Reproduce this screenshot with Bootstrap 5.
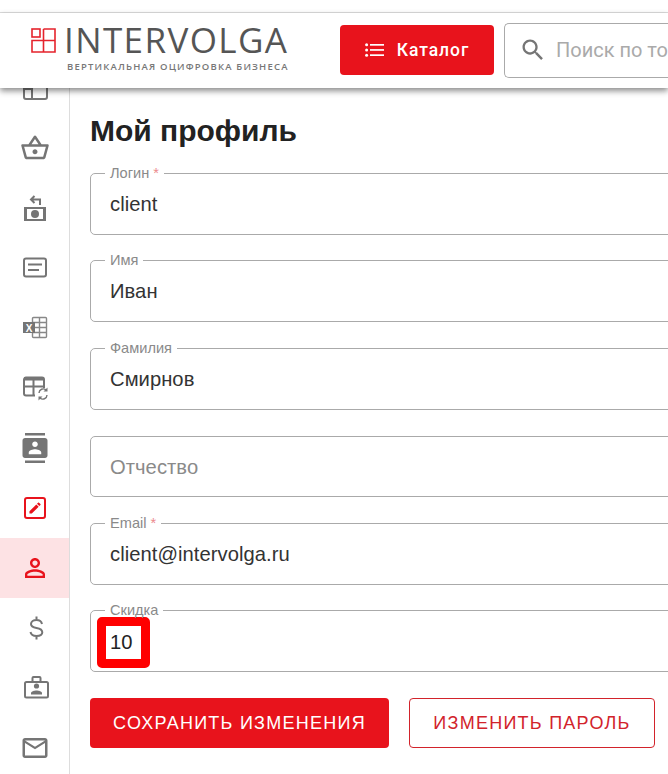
<!DOCTYPE html>
<html lang="ru">
<head>
<meta charset="utf-8">
<title>Мой профиль</title>
<link href="https://cdn.jsdelivr.net/npm/bootstrap@5.3.0/dist/css/bootstrap.min.css" rel="stylesheet">
<style>
html,body{height:774px;overflow:hidden;background:#fff;}
body{font-family:"Liberation Sans",Arial,sans-serif;color:#222;}
.top-strip{height:13px;border-bottom:1px solid #ddd;background:#fff;}
.site-head{height:75px;background:#fff;box-shadow:0 3px 6px rgba(0,0,0,.45);position:relative;z-index:5;width:668px;overflow:visible;}
.logo-box{width:340px;padding-left:31px;flex:none;height:75px;}
.logo-row{gap:8px;height:30px;margin-top:12px;}
.logo-name{font-family:"Open Sans",sans-serif;font-weight:400;font-size:35px;line-height:30px;color:#555;letter-spacing:1.4px;}
.logo-sub{font-family:"Open Sans",sans-serif;font-weight:600;font-size:9.5px;line-height:12px;color:#777;letter-spacing:1.18px;margin:6px 0 0 36px;white-space:nowrap;}
.cat-btn{width:154px;height:50px;background:#e8131c;border:0;border-radius:4px;color:#fff;font-family:Roboto,sans-serif;font-weight:500;font-size:17.5px;letter-spacing:.95px;gap:13px;flex:none;margin-top:-1px;}
.cat-btn:hover{background:#e8131c;color:#fff;}
.search-box{margin-left:10px;width:164px;height:55px;border:1px solid #aaa;border-right:0;border-radius:5px 0 0 5px;padding-left:14px;gap:9px;flex:none;margin-top:-1px;overflow:hidden;}
.search-ph{font-family:Roboto,sans-serif;font-size:20px;color:#aaa;white-space:nowrap;}
.page-body{height:686px;}
.side-rail{width:70px;flex:none;border-right:1px solid #ddd;margin-top:-30px;}
.rail-item{height:60px;flex:none;}
.rail-item svg{width:30px;height:30px;display:block;}
.rail-on{background:#fde2e4;}
.gr{fill:#757575;}
.gs{fill:none;stroke:#757575;stroke-width:2;}
.rd{fill:#e8131c;}
.rs{fill:none;stroke:#e8131c;stroke-width:2;}
.main-pane{padding:25px 0 0 20px;width:598px;overflow:hidden;}
.page-title{font-family:"Liberation Sans",Arial,sans-serif;font-size:30px;font-weight:700;line-height:36px;margin:0 0 17.5px;color:#222;}
.out-field{width:700px;height:68px;border:1px solid #aaa;border-radius:5px;padding:0 19px;margin:0 0 19.5px;display:block;}
.out-field legend{float:none;width:auto;font-size:14.6px;line-height:13px;padding:0 5px;margin:0 0 0 -5px;color:#8a8a8a;}
.out-field .req{color:#ec8a8e;}
.out-val{font-size:20.2px;letter-spacing:.05px;line-height:34px;color:#333;margin-top:7px;}
.out-field.no-leg{height:61.5px;margin-top:26px;padding-top:13px;}
.no-leg .out-val{color:#8a8a8a;margin-top:0;}
.hi-val{margin-left:-13px;width:53px;height:51px;border:9px solid #f00;border-radius:5px;background:#fff;line-height:33px;padding-left:4px;font-size:20.2px;color:#222;}
.act-row{gap:20px;margin-top:26px;}
.save-btn,.pass-btn{font-family:"Liberation Sans",Arial,sans-serif;font-size:18px;letter-spacing:1.25px;height:50px;border-radius:4px;padding:0;white-space:nowrap;}
.save-btn{width:299px;background:#e8131c;border:0;color:#fff;}
.pass-btn{width:246px;background:#fff;border:1px solid #d2232b;color:#d2232b;}
.save-btn:hover{background:#e8131c;color:#fff;}
.pass-btn:hover{background:#fff;color:#d2232b;}
</style>
</head>
<body>
<div class="top-strip"></div>
<header class="site-head d-flex align-items-center">
  <div class="logo-box">
    <div class="logo-row d-flex align-items-center">
      <svg width="25" height="25" viewBox="0 0 25 25" fill="none" stroke="#e5232c" stroke-width="1.6"><rect x="1" y="1" width="8" height="8"/><path d="M12.5 1H24V24H1V12.5H24M12.5 1V24"/></svg>
      <span class="logo-name">INTERVOLGA</span>
    </div>
    <div class="logo-sub">ВЕРТИКАЛЬНАЯ ОЦИФРОВКА БИЗНЕСА</div>
  </div>
  <button class="btn cat-btn d-flex align-items-center justify-content-center" type="button">
    <svg width="19" height="14" viewBox="0 0 19 14" fill="#fff"><circle cx="1.6" cy="1.8" r="1.5"/><circle cx="1.6" cy="7" r="1.5"/><circle cx="1.6" cy="12.2" r="1.5"/><rect x="5" y="1" width="14" height="1.7"/><rect x="5" y="6.1" width="14" height="1.7"/><rect x="5" y="11.3" width="14" height="1.7"/></svg>
    <span>Каталог</span>
  </button>
  <div class="search-box d-flex align-items-center">
    <svg width="28" height="28" viewBox="0 0 24 24" class="gr"><path d="M15.5 14h-.79l-.28-.27C15.41 12.59 16 11.11 16 9.5 16 5.91 13.09 3 9.5 3S3 5.91 3 9.5 5.91 16 9.5 16c1.61 0 3.09-.59 4.23-1.57l.27.28v.79l5 4.99L20.49 19l-4.99-5zm-6 0C7.01 14 5 11.99 5 9.5S7.01 5 9.5 5 14 7.01 14 9.5 11.99 14 9.5 14z"/></svg>
    <span class="search-ph">Поиск по то</span>
  </div>
</header>
<div class="page-body d-flex">
  <nav class="side-rail d-flex flex-column">
    <div class="rail-item d-flex align-items-center justify-content-center"><svg viewBox="0 0 30 30"><rect class="gs" x="4" y="5" width="23" height="21" rx="2"/><path class="gs" d="M12 5V26M4 16H12"/></svg></div>
    <div class="rail-item d-flex align-items-center justify-content-center"><svg viewBox="0 0 24 24" class="gr"><path d="M22 9h-4.79l-4.38-6.56c-.19-.28-.51-.42-.83-.42s-.64.14-.83.43L6.79 9H2c-.55 0-1 .45-1 1 0 .09.01.18.04.27l2.54 9.27c.23.84 1 1.46 1.92 1.46h13c.92 0 1.69-.62 1.93-1.46l2.54-9.27L23 10c0-.55-.45-1-1-1zM12 4.8L14.8 9H9.2L12 4.8zM18.5 19l-12.99.01L3.31 11H20.7l-2.2 8zM12 13c-1.1 0-2 .9-2 2s.9 2 2 2 2-.9 2-2-.9-2-2-2z"/></svg></div>
    <div class="rail-item d-flex align-items-center justify-content-center"><svg viewBox="0 0 30 30"><path class="gs" d="M20 12V6.500H11M14.500 3L11 6.500L14.500 10"/><rect class="gr" x="4" y="14" width="22" height="14"/><rect x="7" y="16" width="16" height="10" fill="#fff"/><circle class="gr" cx="15" cy="21" r="4"/></svg></div>
    <div class="rail-item d-flex align-items-center justify-content-center"><svg viewBox="0 0 30 30"><rect class="gs" x="4" y="5.500" width="22" height="18" rx="2"/><path class="gs" d="M8 11.500H22M8 17H19"/></svg></div>
    <div class="rail-item d-flex align-items-center justify-content-center"><svg viewBox="0 0 30 30"><rect x="12.500" y="4.500" width="14" height="20" rx="1" fill="none" stroke="#888" stroke-width="1.400"/><path d="M12.500 9.500H26.500M12.500 14.500H26.500M12.500 19.500H26.500M19.500 4.500V24.500" fill="none" stroke="#888" stroke-width="1.400"/><rect class="gr" x="3" y="9" width="12" height="11"/><text x="9" y="18.500" text-anchor="middle" font-family="Liberation Sans" font-weight="700" font-size="10" fill="#fff">X</text></svg></div>
    <div class="rail-item d-flex align-items-center justify-content-center"><svg viewBox="0 0 30 30"><path class="gs" d="M15 22.500H6a2 2 0 0 1-2-2V6.500a2 2 0 0 1 2-2H22a2 2 0 0 1 2 2V15M4 13.500H24M13.500 5V22"/><rect class="gr" x="4" y="4" width="20" height="3.500"/><path d="M19 20a4.200 4.200 0 0 1 7-3M27 22a4.200 4.200 0 0 1-7 3" fill="none" stroke="#757575" stroke-width="1.400"/><path class="gr" d="M27.500 14.500V18.500H23.500ZM18.500 27.500V23.500H22.500Z"/></svg></div>
    <div class="rail-item d-flex align-items-center justify-content-center"><svg viewBox="0 0 24 24" class="gr"><path d="M20 0H4v2h16V0zM4 24h16v-2H4v2zM20 4H4c-1.100 0-2 .9-2 2v12c0 1.100.9 2 2 2h16c1.100 0 2-.9 2-2V6c0-1.100-.9-2-2-2zm-8 2.750c1.240 0 2.250 1.010 2.250 2.250s-1.010 2.250-2.250 2.250S9.750 10.240 9.750 9 10.760 6.750 12 6.750zM17 17H7v-1.500c0-1.670 3.330-2.500 5-2.500s5 .83 5 2.500V17z"/></svg></div>
    <div class="rail-item d-flex align-items-center justify-content-center"><svg viewBox="0 0 30 30"><rect class="rs" x="5" y="5" width="20" height="20" rx="2"/><path class="rd" transform="translate(7.600 7.600) scale(.62)" d="M3 17.250V21h3.750L17.810 9.940l-3.750-3.750L3 17.250zM20.710 7.040c.39-.39.39-1.020 0-1.410l-2.340-2.340c-.39-.39-1.020-.39-1.410 0l-1.830 1.830 3.750 3.750 1.830-1.830z"/></svg></div>
    <div class="rail-item rail-on d-flex align-items-center justify-content-center"><svg viewBox="0 0 24 24" class="rd"><path d="M12 5.900c1.160 0 2.100.94 2.100 2.100s-.94 2.100-2.100 2.100S9.900 9.160 9.900 8s.94-2.100 2.100-2.100m0 9c2.970 0 6.100 1.460 6.100 2.100v1.100H5.900V17c0-.64 3.130-2.100 6.100-2.100M12 4C9.790 4 8 5.790 8 8s1.790 4 4 4 4-1.790 4-4-1.790-4-4-4zm0 9c-2.670 0-8 1.340-8 4v3h16v-3c0-2.660-5.330-4-8-4z"/></svg></div>
    <div class="rail-item d-flex align-items-center justify-content-center"><svg viewBox="0 0 30 30"><path class="gs" transform="translate(1.500 0)" d="M20.500 11C20 8.500 18 7 15 7C12 7 9.500 8.500 9.500 11C9.500 13.500 12 14.500 15 15C18 15.500 20.800 16.500 20.800 19.300C20.800 21.500 18.500 23 15 23C12 23 9.500 21.500 9 19M15 3.500V7M15 23V26.500"/></svg></div>
    <div class="rail-item d-flex align-items-center justify-content-center"><svg viewBox="0 0 30 30"><rect class="gs" x="5" y="9" width="23" height="15.500" rx="1.500"/><path class="gs" d="M12.500 9V5a1 1 0 0 1 1-1h6a1 1 0 0 1 1 1V9"/><circle class="gr" cx="16.500" cy="13" r="2.600"/><path class="gr" d="M11 21.500v-1.500c0-1.700 3.500-2.600 5.500-2.600s5.500.9 5.500 2.600v1.500z"/></svg></div>
    <div class="rail-item d-flex align-items-center justify-content-center"><svg viewBox="0 0 24 24" class="gr"><path d="M20 4H4c-1.100 0-1.990.9-1.990 2L2 18c0 1.100.9 2 2 2h16c1.100 0 2-.9 2-2V6c0-1.100-.9-2-2-2zm0 14H4V8l8 5 8-5v10zm-8-7L4 6h16l-8 5z"/></svg></div>
  </nav>
  <main class="main-pane">
    <h1 class="page-title">Мой профиль</h1>
    <fieldset class="out-field"><legend>Логин <span class="req">*</span></legend><div class="out-val">client</div></fieldset>
    <fieldset class="out-field"><legend>Имя</legend><div class="out-val">Иван</div></fieldset>
    <fieldset class="out-field"><legend>Фамилия</legend><div class="out-val">Смирнов</div></fieldset>
    <fieldset class="out-field no-leg"><div class="out-val">Отчество</div></fieldset>
    <fieldset class="out-field"><legend>Email <span class="req">*</span></legend><div class="out-val">client@intervolga.ru</div></fieldset>
    <fieldset class="out-field"><legend>Скидка</legend><div class="hi-val">10</div></fieldset>
    <div class="act-row d-flex">
      <button class="btn save-btn" type="button">СОХРАНИТЬ ИЗМЕНЕНИЯ</button>
      <button class="btn pass-btn" type="button">ИЗМЕНИТЬ ПАРОЛЬ</button>
    </div>
  </main>
</div>
<script src="https://cdn.jsdelivr.net/npm/bootstrap@5.3.0/dist/js/bootstrap.bundle.min.js"></script>
</body>
</html>
